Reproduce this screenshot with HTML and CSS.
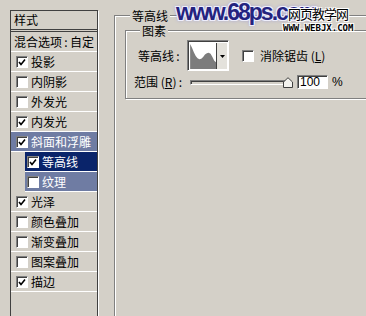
FILE: index.html
```html
<!DOCTYPE html>
<html lang="zh-CN">
<head>
    <meta charset="UTF-8">
    <title>图层样式 - 等高线</title>
    <link rel="stylesheet" href="styles.css">
</head>
<body>

    <div class="dialog">
        <div class="style-list">
            <div class="list-title">样式</div>
            <div class="list-row blend">混合选项<span class="colon">:</span>自定</div>
            <div class="list-row"><span class="check on"><svg viewBox="0 0 8 8"><polyline points="1,4 3,6.5 7,1.5"/></svg></span>投影</div>
            <div class="list-row"><span class="check"></span>内阴影</div>
            <div class="list-row"><span class="check"></span>外发光</div>
            <div class="list-row"><span class="check on"><svg viewBox="0 0 8 8"><polyline points="1,4 3,6.5 7,1.5"/></svg></span>内发光</div>
            <div class="list-row active"><span class="check on"><svg viewBox="0 0 8 8"><polyline points="1,4 3,6.5 7,1.5"/></svg></span>斜面和浮雕</div>
            <div class="list-row sub current"><span class="check on"><svg viewBox="0 0 8 8"><polyline points="1,4 3,6.5 7,1.5"/></svg></span>等高线</div>
            <div class="list-row sub active"><span class="check"></span>纹理</div>
            <div class="list-row"><span class="check on"><svg viewBox="0 0 8 8"><polyline points="1,4 3,6.5 7,1.5"/></svg></span>光泽</div>
            <div class="list-row"><span class="check"></span>颜色叠加</div>
            <div class="list-row"><span class="check"></span>渐变叠加</div>
            <div class="list-row"><span class="check"></span>图案叠加</div>
            <div class="list-row"><span class="check on"><svg viewBox="0 0 8 8"><polyline points="1,4 3,6.5 7,1.5"/></svg></span>描边</div>
        </div>

        <fieldset class="group outer">
            <legend>等高线</legend>
            <fieldset class="group inner">
                <legend>图素</legend>
                <div class="form">
                    <label class="field-label">等高线<span class="colon">:</span></label>
                    <div class="contour-row">
                        <div class="contour-picker">
                            <svg class="contour-preview" viewBox="0 0 28 28">
                                <path d="M0,1 L2,5 L4,10 L6,14 L8,16.5 L10,17.5 L12,17 L14,15 L16,12.5 L18,11 L20,10.5 L22,11.5 L24,15 L26,19 L28,21 L28,28 L0,28 Z"/>
                            </svg>
                            <span class="drop"><svg viewBox="0 0 5 3"><polygon points="0,0 5,0 2.5,3"/></svg></span>
                        </div>
                        <span class="check"></span>
                        <span class="check-text">消除锯齿 (<u>L</u>)</span>
                    </div>

                    <label class="field-label">范围 (<u>R</u>)<span class="colon">:</span></label>
                    <div class="range-row">
                        <div class="slider">
                            <div class="track"></div>
                            <svg class="thumb" viewBox="0 0 10 11"><polygon points="0.5,10.5 0.5,5 5,0.7 9.5,5 9.5,10.5"/></svg>
                        </div>
                        <input class="num" type="text" value="100">
                        <span class="unit">%</span>
                    </div>
                </div>
            </fieldset>
        </fieldset>
    </div>

    <div class="watermark">
        <span class="wm-site">www.68ps.com</span>
        <span class="wm-cn">网页教学网</span>
        <span class="wm-url">WWW.WEBJX.COM</span>
    </div>

</body>
</html>
```

FILE: styles.css
```css
body {
    margin: 0;
    height: 316px;
    overflow: hidden;
    background-color: #d4d0c8;
    font-family: "Noto Sans CJK SC", sans-serif;
    font-size: 12px;
    color: #000;
}

.dialog {
    display: flex;
    align-items: flex-start;
    padding: 10px 0 0 10px;
}

/* left list of styles */
.style-list {
    flex-shrink: 0;
    width: 86px;
    height: 330px;
    border: 1px solid #404040;
    box-shadow: 1px 1px 0 #fff;
}

.list-title {
    height: 18px;
    line-height: 18px;
    padding-left: 3px;
    border-bottom: 3px double #404040;
}

.list-row {
    display: flex;
    align-items: center;
    gap: 3px;
    height: 19px;
    padding-left: 5px;
    border-bottom: 1px solid #fff;
    white-space: nowrap;
    overflow: hidden;
}

.list-row.blend {
    padding-left: 3px;
    gap: 0;
}

.list-row.sub {
    margin-left: 14px;
    padding-left: 2px;
}

.list-row.active {
    background-color: #6f7ca3;
    color: #fff;
}

.list-row.current {
    background-color: #0a246a;
    color: #fff;
}

.colon {
    display: inline-block;
    width: 8px;
    text-align: center;
}

.check {
    flex-shrink: 0;
    display: flex;
    align-items: center;
    justify-content: center;
    width: 10px;
    height: 10px;
    background: #fff;
    border: 1px solid;
    border-color: #808080 #fff #fff #808080;
    box-shadow: inset 1px 1px 0 #404040;
}

.check svg {
    width: 8px;
    height: 8px;
    fill: none;
    stroke: #000;
    stroke-width: 1.6;
}

/* group boxes */
.group {
    margin: 0;
    padding: 0;
    min-inline-size: auto;
    border: 1px solid #808080;
    box-shadow: inset 1px 1px 0 #fff, 1px 1px 0 #fff;
}

.group legend {
    padding: 0 2px;
    line-height: 15px;
    background-color: #d4d0c8;
}

.outer {
    flex-shrink: 0;
    width: 280px;
    height: 330px;
    margin: -2px 0 0 16px;
}

.outer > legend {
    margin-left: 15px;
}

.inner {
    margin-left: 10px;
}

.inner > legend {
    margin-left: 14px;
}

.form {
    display: grid;
    grid-template-columns: 48px auto;
    column-gap: 5px;
    row-gap: 2px;
    align-items: center;
    padding: 2px 0 8px 8px;
}

.field-label {
    text-align: right;
    white-space: nowrap;
}

.contour-row {
    display: flex;
    align-items: center;
}

.contour-picker {
    display: flex;
    box-sizing: border-box;
    width: 42px;
    height: 31px;
    padding: 2px 1px 1px 2px;
    border: 1px solid;
    border-color: #808080 #fff #fff #808080;
    box-shadow: inset 1px 1px 0 #404040;
    background: #fff;
}

.contour-preview {
    width: 27px;
    height: 26px;
    fill: #7c7c7c;
}

.drop {
    display: flex;
    align-items: center;
    justify-content: center;
    width: 10px;
    border-left: 1px solid #404040;
    background-color: #e4e2dc;
}

.drop svg {
    width: 5px;
    height: 3px;
    fill: #000;
}

.contour-row .check {
    margin-left: 13px;
}

.check-text {
    margin-left: 6px;
}

.range-row {
    display: flex;
    align-items: center;
    height: 14px;
}

.slider {
    position: relative;
    width: 107px;
    height: 14px;
}

.track {
    box-sizing: border-box;
    width: 99px;
    height: 5px;
    margin: 5px 0 0 3px;
    border: 1px solid;
    border-color: #808080 #fff #fff #808080;
    box-shadow: inset 1px 1px 0 #404040;
    background-color: #d4d0c8;
}

.thumb {
    position: absolute;
    right: 1px;
    top: 2px;
    width: 10px;
    height: 11px;
    fill: #f4f3ef;
    stroke: #404040;
    stroke-width: 1;
}

.num {
    box-sizing: border-box;
    width: 31px;
    height: 14px;
    margin: 0 0 0 3px;
    padding: 0 2px;
    border: 1px solid;
    border-color: #808080 #fff #fff #808080;
    box-shadow: inset 1px 1px 0 #404040;
    font-family: "Liberation Sans", sans-serif;
    font-size: 12px;
    line-height: 12px;
}

.unit {
    margin-left: 4px;
    font-family: "Liberation Sans", sans-serif;
}

/* watermark laid over the dialog */
.watermark {
    pointer-events: none;
}

.wm-site {
    position: absolute;
    left: 176px;
    top: 1px;
    font-family: "Liberation Sans", sans-serif;
    font-weight: bold;
    font-size: 23px;
    line-height: 23px;
    letter-spacing: -2px;
    color: #24237f;
    text-shadow: 1px 1px 0 #eeeefc, -1px -1px 0 #eeeefc, 1px -1px 0 #eeeefc, -1px 1px 0 #eeeefc, 0 0 4px #8c8ad8;
}

.wm-cn {
    position: absolute;
    left: 288px;
    top: 6px;
    font-size: 13px;
    line-height: 16px;
    letter-spacing: -1px;
    color: #000;
    text-shadow: 1px 1px 0 #fff, -1px -1px 0 #fff, 1px -1px 0 #fff, -1px 1px 0 #fff;
}

.wm-url {
    position: absolute;
    left: 283px;
    top: 23px;
    font-family: "DejaVu Sans Mono", monospace;
    font-weight: bold;
    font-size: 9px;
    line-height: 10px;
    color: #000;
    text-shadow: 1px 1px 0 #fff, -1px -1px 0 #fff, 1px -1px 0 #fff, -1px 1px 0 #fff;
}
```
